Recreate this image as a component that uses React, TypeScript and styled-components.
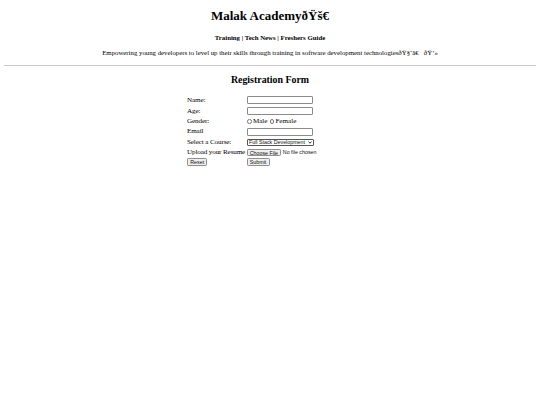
import React from "react";
import styled, { createGlobalStyle } from "styled-components";

const Global = createGlobalStyle`
  html, body { margin: 0; padding: 0; background: #fff; }
  body { padding: 0 4px; font-family: "Liberation Serif", "Times New Roman", serif; color: #000; display: flow-root; }
  #root { display: flow-root; }
`;

const Title = styled.h1`
  margin: 8px 0 0;
  text-align: center;
  font-size: 13px;
  line-height: 15px;
  font-weight: bold;
`;

const Nav = styled.nav`
  margin-top: 9.5px;
  text-align: center;
  font-size: 6.8px;
  line-height: 9px;
  font-weight: bold;
`;

const Tagline = styled.p`
  margin: 6px 0 0;
  text-align: center;
  font-size: 6.8px;
  line-height: 9px;
  white-space: pre;
  color: #000;
`;

const Rule = styled.hr`
  margin: 8px 0 0;
  border: 0;
  border-top: 1px solid #c8c8c8;
  height: 0;
`;

const FormTitle = styled.h2`
  margin: 8px 0 0;
  text-align: center;
  font-size: 9.9px;
  line-height: 11px;
  font-weight: bold;
`;

const Form = styled.form`
  width: 166px;
  margin: 10px auto 0;
  display: flex;
  flex-direction: column;
`;

const Row = styled.div<{ $h: number }>`
  display: grid;
  grid-template-columns: 59.5px 1fr;
  align-items: center;
  height: ${(p) => p.$h}px;
`;

const Label = styled.label`
  font-size: 7.1px;
  letter-spacing: -0.12px;
  line-height: 9px;
  white-space: nowrap;
  color: #000;
`;

const TextInput = styled.input`
  box-sizing: border-box;
  width: 66.5px;
  height: 8px;
  margin: 0;
  padding: 0;
  border: 0.6px solid #8a8a8a;
  border-radius: 1px;
  background: #fff;
  font-size: 6px;
`;

const Radios = styled.div`
  display: flex;
  align-items: center;
  font-size: 7.1px;
  line-height: 9px;
  color: #000;
`;

const Radio = styled.input`
  appearance: none;
  box-sizing: border-box;
  width: 4.6px;
  height: 4.6px;
  margin: 0 1.2px 0 0.6px;
  border: 0.6px solid #777;
  border-radius: 50%;
  background: #fff;
`;

const RadioText = styled.span`
  margin-right: 1.6px;
`;

const Select = styled.div`
  box-sizing: border-box;
  width: 67.5px;
  height: 6.6px;
  border: 0.6px solid #555;
  border-radius: 1px;
  display: flex;
  align-items: center;
  justify-content: space-between;
  padding: 0 1px 0 1.5px;
  font-family: "Liberation Sans", Arial, sans-serif;
  font-size: 5.3px;
  line-height: 6px;
  color: #111;
  background: #fff;
`;

const Button = styled.button`
  box-sizing: border-box;
  height: 7.8px;
  padding: 0 2.3px;
  margin: 0;
  border: 0.6px solid #8f8f8f;
  border-radius: 1.2px;
  background: #efefef;
  font-family: "Liberation Sans", Arial, sans-serif;
  font-size: 5.3px;
  line-height: 6px;
  color: #111;
  cursor: default;
`;

const FileRow = styled.div`
  display: flex;
  align-items: center;
  gap: 1.5px;
  font-family: "Liberation Sans", Arial, sans-serif;
  font-size: 5.3px;
  white-space: nowrap;
  color: #111;
`;

const Cell = styled.div`
  display: flex;
  align-items: center;
`;

export default function App() {
  return (
    <>
      <Global />
      <Title>Malak AcademyðŸš€</Title>
      <Nav>Training | Tech News | Freshers Guide</Nav>
      <Tagline>
        {"Empowering young developers to level up their skills through training in software development technologiesðŸ§‘â€   ðŸ’»"}
      </Tagline>
      <Rule />
      <FormTitle>Registration Form</FormTitle>
      <Form onSubmit={(e) => e.preventDefault()}>
        <Row $h={11}>
          <Label htmlFor="name">Name:</Label>
          <Cell><TextInput id="name" type="text" /></Cell>
        </Row>
        <Row $h={11}>
          <Label htmlFor="age">Age:</Label>
          <Cell><TextInput id="age" type="text" /></Cell>
        </Row>
        <Row $h={10}>
          <Label>Gender:</Label>
          <Radios>
            <Radio type="radio" name="g" />
            <RadioText>Male</RadioText>
            <Radio type="radio" name="g" />
            <RadioText>Female</RadioText>
          </Radios>
        </Row>
        <Row $h={10.5}>
          <Label htmlFor="email">Email</Label>
          <Cell><TextInput id="email" type="text" /></Cell>
        </Row>
        <Row $h={10.5}>
          <Label>Select a Course:</Label>
          <Cell>
            <Select>
              <span>Full Stack Development</span>
              <svg width="4" height="3" viewBox="0 0 8 6">
                <path d="M1 1 L4 4.5 L7 1" fill="none" stroke="#111" strokeWidth="1.6" />
              </svg>
            </Select>
          </Cell>
        </Row>
        <Row $h={10}>
          <Label>Upload your Resume</Label>
          <FileRow>
            <Button type="button">Choose File</Button>
            <span>No file chosen</span>
          </FileRow>
        </Row>
        <Row $h={9}>
          <Cell><Button type="reset">Reset</Button></Cell>
          <Cell><Button type="submit">Submit</Button></Cell>
        </Row>
      </Form>
    </>
  );
}
